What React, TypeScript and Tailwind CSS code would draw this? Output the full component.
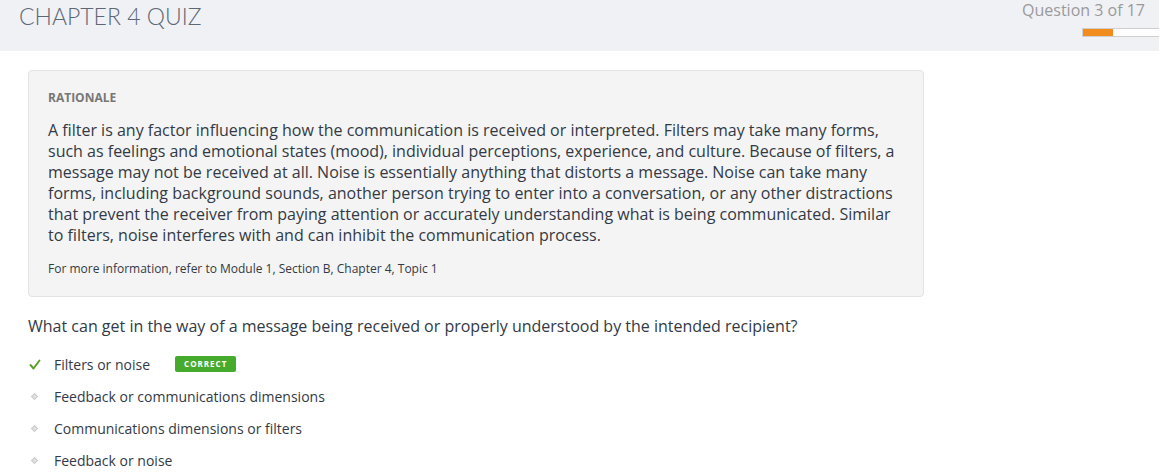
import React from "react";

const options = [
  "Feedback or communications dimensions",
  "Communications dimensions or filters",
  "Feedback or noise",
];

export default function App() {
  return (
    <div className="min-h-[474px] bg-white" style={{ fontFamily: '"Open Sans", sans-serif' }}>
      <header className="h-[51px] bg-[#f0f1f5] flex justify-between">
        <h1
          className="pl-[19px] pt-[0px] text-[23px] leading-[32px] font-light text-[#5d6877] tracking-[0px]"
          style={{ fontFamily: 'Lato, sans-serif' }}
        >
          CHAPTER 4 QUIZ
        </h1>
        <div className="flex flex-col items-end pr-[14px] pt-0">
          <div className="text-[16px] leading-[21px] text-[#9a9a9a]">Question 3 of 17</div>
          <div className="mt-[7px] -mr-[14px] w-[77px] h-[9px] bg-white border border-[#cfcfcf] border-r-0 flex">
            <div className="w-[30px] h-full bg-[#f28c1e]" />
          </div>
        </div>
      </header>

      <main className="pl-[28px] pt-[19px]">
        <section className="w-[896px] bg-[#f4f4f4] border border-[#e3e3e3] rounded-[4px] px-[19px] pt-[19px] pb-[19px]">
          <div className="text-[12px] leading-[16px] font-bold text-[#777] tracking-[0px]">RATIONALE</div>
          <p className="mt-[14px] text-[16px] leading-[21px] text-[#333a45]">
            A filter is any factor influencing how the communication is received or interpreted. Filters may take many forms, such as feelings and emotional states (mood), individual perceptions, experience, and culture. Because of filters, a message may not be received at all. Noise is essentially anything that distorts a message. Noise can take many forms, including background sounds, another person trying to enter into a conversation, or any other distractions that prevent the receiver from paying attention or accurately understanding what is being communicated. Similar to filters, noise interferes with and can inhibit the communication process.
          </p>
          <p className="mt-[15px] text-[12px] leading-[16px] text-[#333a45]">
            For more information, refer to Module 1, Section B, Chapter 4, Topic 1
          </p>
        </section>

        <div className="mt-[18px] text-[16px] leading-[22px] text-[#333a45]">
          What can get in the way of a message being received or properly understood by the intended recipient?
        </div>

        <ul className="mt-[17px] flex flex-col gap-[12px]">
          <li className="flex items-center h-[20px] text-[14px] text-[#333a45]">
            <span className="w-[26px] flex">
              <svg width="14" height="14" viewBox="0 0 14 14">
                <path d="M2.5 8 L5.5 11.5 L11.5 3.5" fill="none" stroke="#5aa02c" strokeWidth="2" strokeLinecap="round" strokeLinejoin="round" />
              </svg>
            </span>
            <span>Filters or noise</span>
            <span className="ml-[25px] h-[16px] px-[9px] rounded-[2px] bg-[#46ab2c] text-white text-[8px] font-bold tracking-[1px] flex items-center">
              CORRECT
            </span>
          </li>
          {options.map((o) => (
            <li key={o} className="flex items-center h-[20px] text-[14px] text-[#333a45]">
              <span className="w-[26px] flex pl-[4px]">
                <span className="w-[5px] h-[5px] rotate-45 border border-[#c8c8c8] bg-[#e4e4e4]" />
              </span>
              <span>{o}</span>
            </li>
          ))}
        </ul>
      </main>
    </div>
  );
}
